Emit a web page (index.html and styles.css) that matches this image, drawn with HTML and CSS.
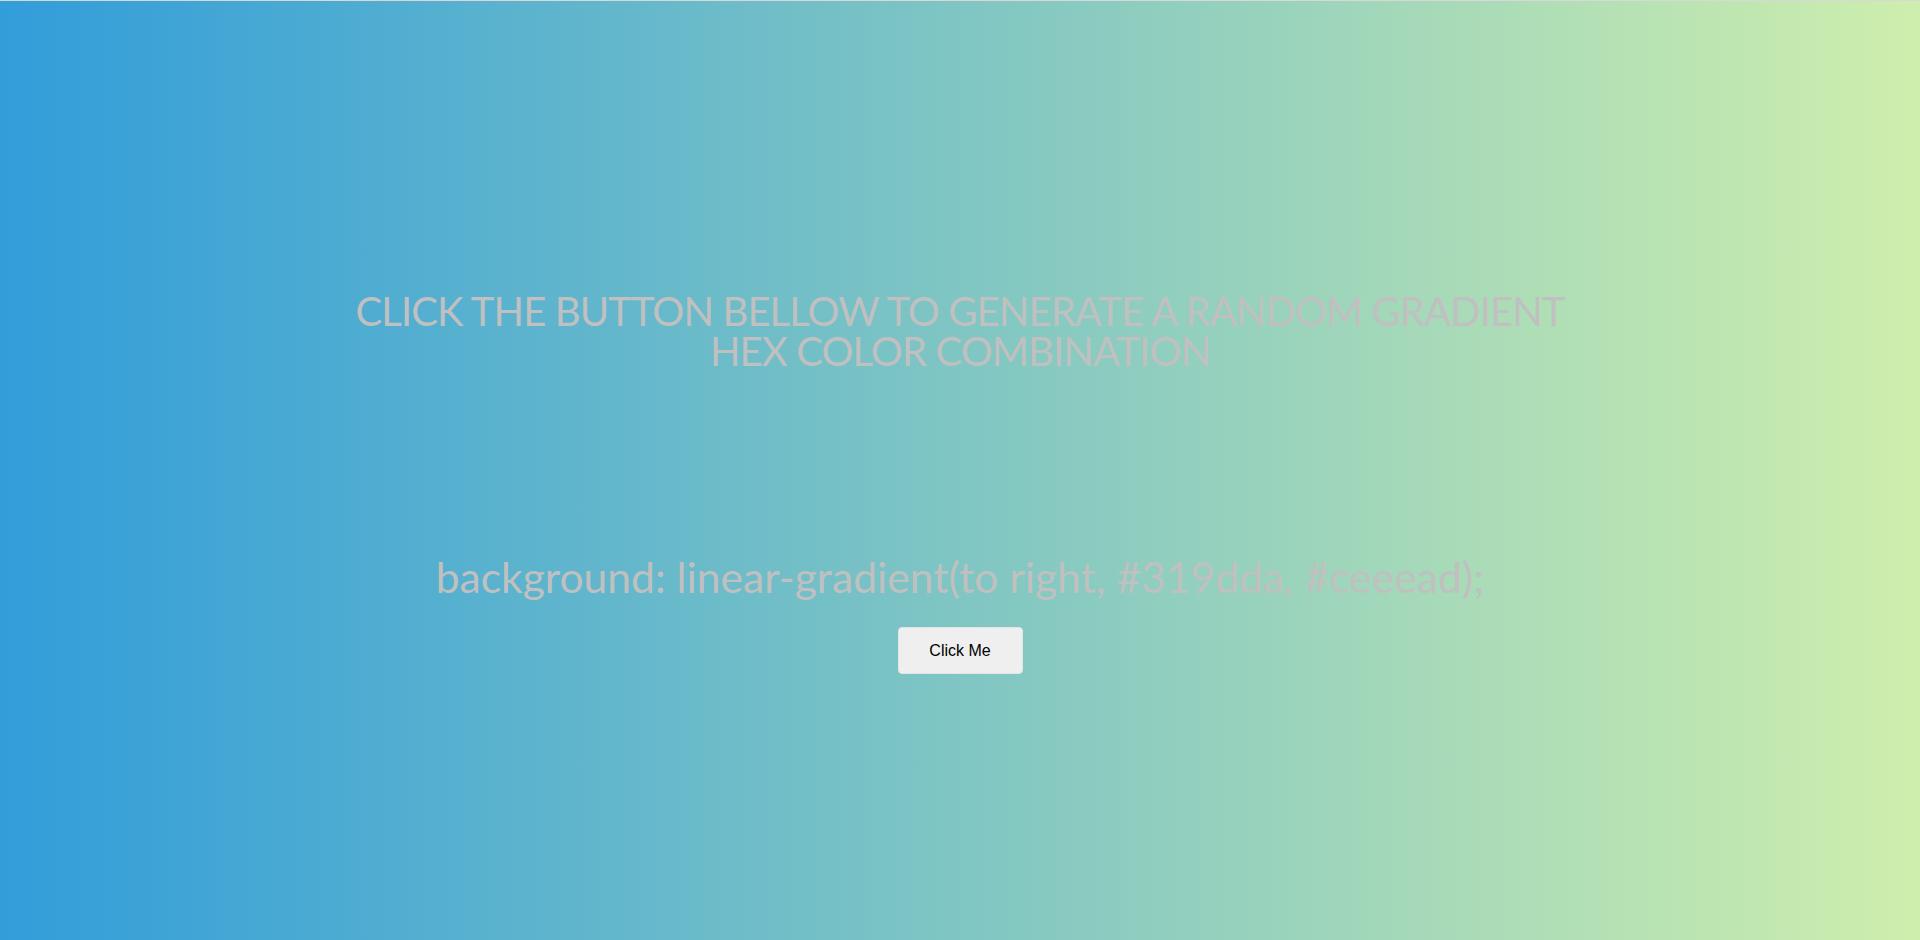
FILE: index.html
```html
<!DOCTYPE html>
<html>
<head>
<meta charset="utf-8">
<link rel="stylesheet" href="styles.css">
</head>
<body>
<main class="page">
  <h1 class="title">CLICK THE BUTTON BELLOW TO GENERATE A RANDOM GRADIENT<br>HEX COLOR COMBINATION</h1>
  <h3 class="code">background: linear-gradient(to right, #319dda, #ceeead);</h3>
  <button class="btn">Click Me</button>
</main>
</body>
</html>
```
FILE: styles.css
```css
html, body {
  margin: 0;
  padding: 0;
  height: 100%;
}
body {
  background: linear-gradient(to right, #319dda, #ceeead);
  border-top: 1px solid #d8d8d8;
  box-sizing: border-box;
  font-family: Lato, "Open Sans", sans-serif;
  color: #c0c0c0;
}
.page {
  display: flex;
  flex-direction: column;
  align-items: center;
  text-align: center;
  padding-top: 290px;
}
.title {
  margin: 0;
  font-weight: 400;
  font-size: 40px;
  letter-spacing: -0.9px;
  line-height: 40px;
}
.code {
  margin: 179px 0 0 0;
  font-weight: 400;
  font-size: 42.6px;
  line-height: 54px;
}
.btn {
  margin-top: 23px;
  width: 125px;
  height: 47px;
  background: #efefef;
  border: 1px solid #e4e4e4;
  border-radius: 4px;
  font-family: "Liberation Sans", Arial, sans-serif;
  font-size: 16px;
  color: #000;
  cursor: pointer;
}
```
